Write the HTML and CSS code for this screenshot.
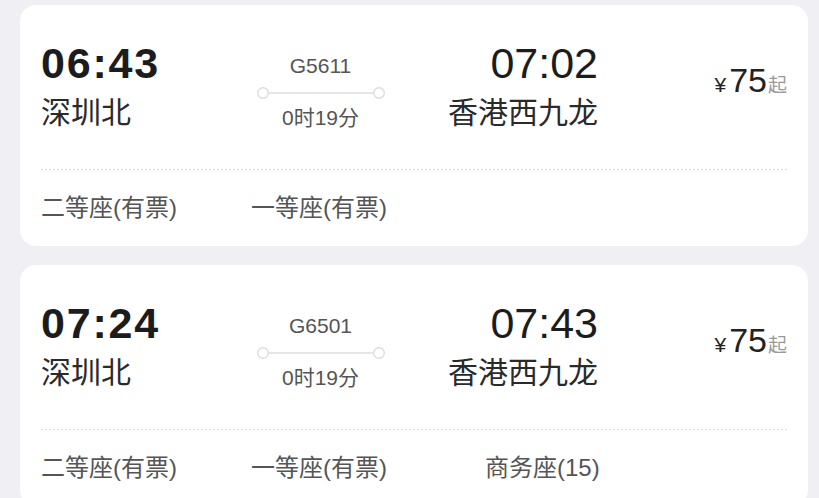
FILE: index.html
```html
<!DOCTYPE html>
<html lang="zh-CN">
<head>
<meta charset="utf-8">
<title>车次列表</title>
<link rel="stylesheet" href="styles.css">
</head>
<body>
<div class="list">
  <div class="card">
    <div class="top">
      <div class="dep">
        <div class="time bold">06:43</div>
        <div class="station">深圳北</div>
      </div>
      <div class="mid">
        <div class="train">G5611</div>
        <svg class="route" width="130" height="14" viewBox="0 0 130 14">
          <line x1="12.5" y1="7" x2="117.5" y2="7" stroke="#e6e6e8" stroke-width="2"/>
          <circle cx="7" cy="7" r="5.3" fill="#fff" stroke="#dcdcdf" stroke-width="1.4"/>
          <circle cx="123" cy="7" r="5.3" fill="#fff" stroke="#dcdcdf" stroke-width="1.4"/>
        </svg>
        <div class="dur">0时19分</div>
      </div>
      <div class="arr">
        <div class="time">07:02</div>
        <div class="station">香港西九龙</div>
      </div>
      <div class="price"><span class="yen">¥</span><span class="num">75</span><span class="qi">起</span></div>
    </div>
    <div class="divider"></div>
    <div class="seats">
      <span class="seat s1">二等座(有票)</span>
      <span class="seat s2">一等座(有票)</span>
    </div>
  </div>
  <div class="card">
    <div class="top">
      <div class="dep">
        <div class="time bold">07:24</div>
        <div class="station">深圳北</div>
      </div>
      <div class="mid">
        <div class="train">G6501</div>
        <svg class="route" width="130" height="14" viewBox="0 0 130 14">
          <line x1="12.5" y1="7" x2="117.5" y2="7" stroke="#e6e6e8" stroke-width="2"/>
          <circle cx="7" cy="7" r="5.3" fill="#fff" stroke="#dcdcdf" stroke-width="1.4"/>
          <circle cx="123" cy="7" r="5.3" fill="#fff" stroke="#dcdcdf" stroke-width="1.4"/>
        </svg>
        <div class="dur">0时19分</div>
      </div>
      <div class="arr">
        <div class="time">07:43</div>
        <div class="station">香港西九龙</div>
      </div>
      <div class="price"><span class="yen">¥</span><span class="num">75</span><span class="qi">起</span></div>
    </div>
    <div class="divider"></div>
    <div class="seats">
      <span class="seat s1">二等座(有票)</span>
      <span class="seat s2">一等座(有票)</span>
      <span class="seat s3">商务座(15)</span>
    </div>
  </div>
</div>
</body>
</html>
```
FILE: styles.css
```css
html, body {
  margin: 0;
  padding: 0;
}
body {
  background: #efeff4;
  font-family: "Liberation Sans", "Noto Sans CJK SC", sans-serif;
  color: #222;
  overflow: hidden;
  height: 498px;
}
.list {
  display: flex;
  flex-direction: column;
  gap: 19px;
  padding: 5px 11px 0 20px;
}
.card {
  background: #fff;
  border-radius: 16px;
  padding: 37px 21px 27px;
}
.top {
  display: grid;
  grid-template-columns: 200px 159px 198px 1fr;
  align-items: start;
  height: 86px;
}
.time {
  font-size: 43px;
  line-height: 43px;
  color: #1c1c1c;
}
.time.bold {
  font-weight: bold;
  letter-spacing: 1.8px;
}
.station {
  font-size: 30px;
  line-height: 30px;
  margin-top: 13px;
  color: #2a2a2a;
}
.mid {
  display: flex;
  flex-direction: column;
  align-items: center;
  padding-top: 13px;
  color: #555;
}
.train {
  font-size: 21px;
  line-height: 21px;
}
.route {
  display: block;
  margin-top: 10px;
}
.dur {
  font-size: 21px;
  line-height: 21px;
  margin-top: 7px;
}
.arr {
  text-align: right;
}
.price {
  text-align: right;
  padding-top: 21px;
  line-height: 34px;
  color: #222;
}
.yen {
  font-size: 21px;
  margin-right: 3px;
}
.num {
  font-size: 34px;
}
.qi {
  font-size: 19px;
  color: #999;
  margin-left: 1px;
}
.divider {
  margin-top: 41px;
  height: 1px;
  background-image: linear-gradient(to right, #dcdcdc 50%, transparent 50%);
  background-size: 4px 1px;
}
.seats {
  display: grid;
  grid-template-columns: 210px 234px auto;
  margin-top: 26px;
}
.seat {
  font-size: 24px;
  line-height: 23px;
  color: #555;
}
```
